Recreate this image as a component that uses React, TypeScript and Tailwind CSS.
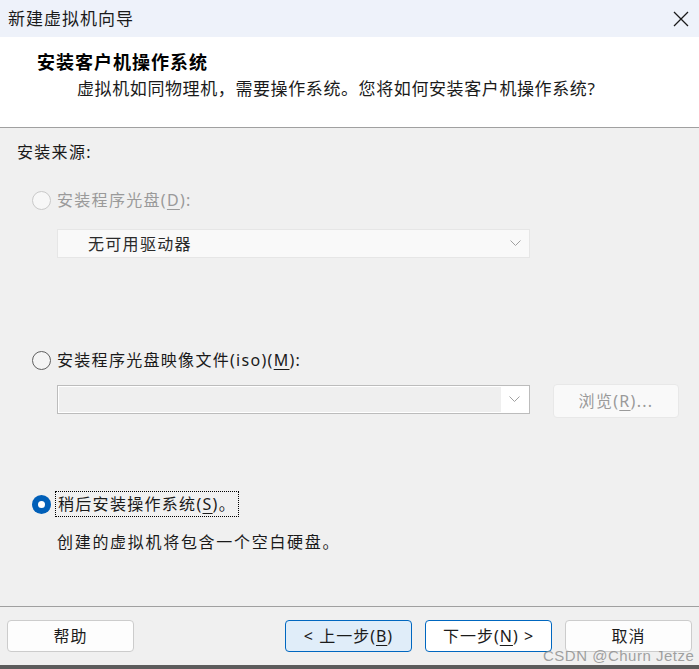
import { ReactNode } from 'react'

const font = "font-['Noto_Sans','Noto_Sans_CJK_SC',sans-serif]"

function Radio({ state }: { state: 'disabled' | 'off' | 'on' }) {
    if (state === 'on') {
        return (
            <span className="w-[19px] h-[19px] rounded-full bg-[#005fb8] flex items-center justify-center shrink-0">
                <span className="w-[7px] h-[7px] rounded-full bg-white" />
            </span>
        )
    }
    return (
        <span
            className={
                state === 'disabled'
                    ? 'w-[19px] h-[19px] rounded-full border border-[#c9c9c9] bg-[#f7f7f7] shrink-0'
                    : 'w-[19px] h-[19px] rounded-full border border-[#5f5f5f] bg-[#f4f4f4] shrink-0'
            }
        />
    )
}

function Chevron() {
    return (
        <svg width="11" height="7" viewBox="0 0 11 7" className="shrink-0">
            <polyline points="0.5,0.5 5.5,5.5 10.5,0.5" fill="none" stroke="#a0a0a0" strokeWidth="1" />
        </svg>
    )
}

function U({ children }: { children: ReactNode }) {
    return <span className="underline underline-offset-[3px]">{children}</span>
}

type BtnProps = { children: ReactNode; kind?: 'default' | 'primary' | 'blue' }

function Btn({ children, kind = 'default' }: BtnProps) {
    const cls =
        kind === 'primary'
            ? 'bg-[#e0edf9] border-[#0067c0]'
            : kind === 'blue'
            ? 'bg-white border-[#0067c0]'
            : 'bg-[#fdfdfd] border-[#cccccc]'
    return (
        <button className={`w-[127px] h-[32px] rounded-[4px] border ${cls} flex items-center justify-center text-[16px] tracking-[1px] text-[#1b1b1b]`}>
            {children}
        </button>
    )
}

export default function App() {
    return (
        <div className={`w-[699px] h-[669px] flex flex-col bg-[#f0f0f0] relative overflow-hidden ${font}`}>
            {/* title bar */}
            <div className="h-[37px] bg-[#eef2fa] flex items-center justify-between pl-[8px] pr-[10px]">
                <span className="text-[17px] tracking-[1px] text-[#1a1a1a]">新建虚拟机向导</span>
                <svg width="16" height="16" viewBox="0 0 16 16">
                    <path d="M1 1 L15 15 M15 1 L1 15" stroke="#1a1a1a" strokeWidth="1.3" fill="none" />
                </svg>
            </div>

            {/* header */}
            <div className="h-[91px] bg-white border-b border-[#a0a0a0] pl-[37px] pt-[13px] flex flex-col">
                <span className="text-[18px] leading-[24px] font-bold tracking-[1px] text-black">安装客户机操作系统</span>
                <span className="mt-[3px] ml-[40px] text-[17px] leading-[24px] tracking-[0.6px] text-[#1a1a1a]">
                    虚拟机如同物理机，需要操作系统。您将如何安装客户机操作系统?
                </span>
            </div>

            {/* body */}
            <div className="h-[478px] pl-[17px] pt-[12px] flex flex-col text-[16px] tracking-[1.3px] text-[#1a1a1a]">
                <span className="leading-[24px]">安装来源:</span>

                <div className="mt-[24px] h-[24px] flex items-center pl-[15px] gap-[6px]">
                    <Radio state="disabled" />
                    <span className="text-[#9a9a9a]">
                        安装程序光盘(<U>D</U>):
                    </span>
                </div>

                <div className="mt-[17px] ml-[40px] w-[473px] h-[29px] bg-[#f9f9f9] border border-[#e6e6e6] flex items-center justify-between pl-[30px] pr-[8px]">
                    <span className="text-[#2a2a2a]">无可用驱动器</span>
                    <Chevron />
                </div>

                <div className="mt-[90px] h-[24px] flex items-center pl-[15px] gap-[6px]">
                    <Radio state="off" />
                    <span>
                        安装程序光盘映像文件(iso)(<U>M</U>):
                    </span>
                </div>

                <div className="mt-[12px] ml-[40px] flex items-start gap-[23px]">
                    <div className="mt-[1px] w-[473px] h-[29px] bg-white border border-[#bcbcbc] flex p-[1px]">
                        <div className="flex-1 bg-[#efefef]" />
                        <div className="w-[27px] flex items-center justify-center">
                            <Chevron />
                        </div>
                    </div>
                    <div className="w-[126px] h-[34px] rounded-[4px] bg-[#f9f9f9] border border-[#e8e8e8] flex items-center justify-center text-[#9a9a9a]">
                        浏览(<U>R</U>)...
                    </div>
                </div>

                <div className="mt-[74px] h-[24px] flex items-center pl-[15px] gap-[4px]">
                    <Radio state="on" />
                    <span className="h-[26px] px-[2px] border border-dotted border-black flex items-center">
                        稍后安装操作系统(<U>S</U>)。
                    </span>
                </div>

                <span className="mt-[14px] ml-[40px] leading-[24px] tracking-[1.7px]">创建的虚拟机将包含一个空白硬盘。</span>
            </div>

            {/* footer */}
            <div className="h-[59px] border-t border-[#a0a0a0] pt-[13px] px-[7px] flex items-start">
                <Btn>帮助</Btn>
                <div className="flex-1" />
                <div className="flex gap-[13px]">
                    <Btn kind="primary">
                        &lt; 上一步(<U>B</U>)
                    </Btn>
                    <Btn kind="blue">
                        下一步(<U>N</U>) &gt;
                    </Btn>
                    <Btn>取消</Btn>
                </div>
            </div>
            <div className="h-[4px] bg-[#5c5c5c]" />

            <span className="absolute left-[543px] top-[645px] text-[15px] tracking-[0.5px] font-['Liberation_Sans',sans-serif] text-[#8a8a8a]/80">
                CSDN @Churn Jetze
            </span>
        </div>
    )
}
